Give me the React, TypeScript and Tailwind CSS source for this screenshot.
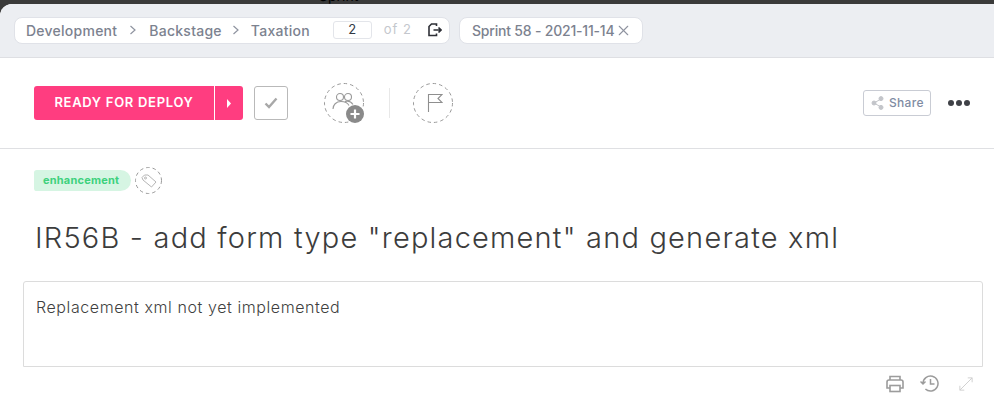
import React from "react";
import { X } from "lucide-react";

const F = { fontFamily: '"Inter", "Noto Sans", sans-serif' };

function Dashed({ size, children }: { size: number; children?: React.ReactNode }) {
  return (
    <div className="relative shrink-0" style={{ width: size, height: size }}>
      <svg className="absolute inset-0" width={size} height={size}>
        <circle cx={size / 2} cy={size / 2} r={size / 2 - 0.5} fill="none" stroke="#9a9a9a" strokeDasharray="3.5 3" />
      </svg>
      {children}
    </div>
  );
}

export default function App() {
  return (
    <div className="w-[994px] h-[412px] bg-[#3a3a3a] overflow-hidden relative" style={F}>
      <div className="h-1 bg-[#3a3a3a] relative overflow-hidden">
        <span className="absolute left-[319px] top-[-12px] text-[14px] leading-[16px] text-black">Sprint</span>
      </div>
      <div className="bg-white rounded-tl-[12px] h-[408px] flex flex-col">
        <div className="h-[54px] bg-[#eceef2] border-b border-[#dedfe3] rounded-tl-[12px] flex items-center gap-[9px] pl-[14px] pb-[1px] shrink-0">
          <div className="h-[27px] w-[436px] bg-white border border-[#e0e2e8] rounded-[8px] flex items-center text-[#7c828f] text-[14px] font-medium tracking-[0.25px] pl-[11px]">
            <span>Development</span>
            <svg className="ml-[12px] mr-[12px]" width="8" height="10" viewBox="0 0 8 10" fill="none" stroke="#8f94a0" strokeWidth="1.2"><path d="M1.5 1l4.5 4-4.5 4" /></svg>
            <span>Backstage</span>
            <svg className="ml-[10px] mr-[11px]" width="8" height="10" viewBox="0 0 8 10" fill="none" stroke="#8f94a0" strokeWidth="1.2"><path d="M1.5 1l4.5 4-4.5 4" /></svg>
            <span>Taxation</span>
            <div className="ml-[23px] w-[39px] h-[18px] border border-[#e3e5ea] rounded-[3px] flex items-center justify-center text-[13px] font-normal text-[#333a45]">2</div>
            <span className="ml-[12px] text-[13px] font-normal text-[#c4c7cd] tracking-[1px]">of 2</span>
            <svg className="ml-[16px]" width="14" height="14" viewBox="0 0 14 14" fill="none" stroke="#2d2f36" strokeWidth="1.6"><path d="M8.5 3V1H3.5L1 3.5V12.5H8.5V10.5M5.5 7H13M10.5 4.5L13 7l-2.5 2.5" /></svg>
          </div>
          <div className="h-[27px] w-[184px] bg-white border border-[#e0e2e8] rounded-[8px] flex items-center text-[#7c828f] text-[14px] font-medium pl-[12px]">
            <span className="whitespace-nowrap tracking-[-0.2px]">Sprint 58 - 2021-11-14</span>
            <X size={17} className="ml-[1px] text-[#8f94a0]" strokeWidth={1.6} />
          </div>
        </div>

        <div className="h-[91px] border-b border-[#dfe0e3] flex items-center pl-[34px] pr-[24px] shrink-0">
          <div className="flex h-[34px] w-[209px] rounded-[3px] overflow-hidden bg-[#ff3d80] text-white">
            <div className="w-[180px] flex items-center justify-center text-[13px] font-semibold tracking-[0.7px]">READY FOR DEPLOY</div>
            <div className="w-[1px] bg-white" />
            <div className="flex-1 flex items-center justify-center">
              <svg width="6" height="9" viewBox="0 0 6 9" fill="#fff"><path d="M1 0l4 4.5L1 9z" /></svg>
            </div>
          </div>
          <div className="ml-[11px] w-[34px] h-[34px] border border-[#b9b9b9] rounded-[3px] flex items-center justify-center">
            <svg width="14" height="12" viewBox="0 0 14 12" fill="none" stroke="#a8a8a8" strokeWidth="2.4"><path d="M1.5 6.5l3.5 3.5 7.5-8.5" /></svg>
          </div>
          <div className="ml-[36px]">
            <Dashed size={40}>
              <svg className="absolute left-[8px] top-[9px]" width="24" height="20" viewBox="0 0 24 20" fill="none" stroke="#9a9a9a" strokeWidth="1.1">
                <circle cx="8" cy="5" r="3.5" /><circle cx="16" cy="5" r="3.5" />
                <path d="M1 17c0-4 3-7.5 8-7.5s7 2 8 4M13 9.5c3-1 6 0 8 3" />
              </svg>
              <div className="absolute left-[22px] top-[22px] w-[18px] h-[18px] rounded-full bg-[#8a8a8a] flex items-center justify-center">
                <svg width="10" height="10" viewBox="0 0 10 10" stroke="#fff" strokeWidth="2.2"><path d="M5 0.5v9M0.5 5h9" /></svg>
              </div>
            </Dashed>
          </div>
          <div className="ml-[25px] w-px h-[30px] bg-[#e8e8e8]" />
          <div className="ml-[23px]">
            <Dashed size={40}>
              <svg className="absolute left-[14px] top-[10px]" width="16" height="20" viewBox="0 0 16 20" fill="none" stroke="#8f8f8f" strokeWidth="1.1"><path d="M1.5 19V1.5H15L11 5.5l4 4H1.5" /></svg>
            </Dashed>
          </div>
          <div className="ml-auto flex items-center">
            <div className="h-[26px] w-[68px] border border-[#c9ccd4] rounded-[3px] flex items-center pl-[7px] gap-[5px] text-[12px] font-medium tracking-[0.3px] text-[#7f8ca3]">
              <svg width="13" height="14" viewBox="0 0 13 14" fill="#c3c5ca" stroke="#c3c5ca"><path d="M10 3L3 7l7 4" fill="none" /><circle cx="10" cy="2.6" r="2" /><circle cx="3" cy="7" r="2" /><circle cx="10" cy="11.4" r="2" /></svg>
              <span>Share</span>
            </div>
            <div className="ml-[17px] flex gap-[2px]">
              <div className="w-[6px] h-[6px] rounded-full bg-[#3f4147]" />
              <div className="w-[6px] h-[6px] rounded-full bg-[#3f4147]" />
              <div className="w-[6px] h-[6px] rounded-full bg-[#3f4147]" />
            </div>
          </div>
        </div>

        <div className="flex items-center pl-[34px] pt-[18px] gap-[4px]">
          <div className="h-[21px] w-[97px] bg-[#d6f5e3] rounded-l-[3px] rounded-r-[11px] flex items-center pl-[9px] text-[11px] font-bold tracking-[0.2px] text-[#3ed17d]">enhancement</div>
          <Dashed size={27}>
            <svg className="absolute left-[6px] top-[7px]" width="16" height="14" viewBox="0 0 16 14" fill="none" stroke="#b5b5b5" strokeWidth="1"><path d="M1 3.5L3.5 1H7l8 7-4.5 5L2 6z" /><circle cx="4.5" cy="4" r="1" /></svg>
          </Dashed>
        </div>

        <h1 className="ml-[35px] mt-[26px] text-[29px] leading-[36px] text-[#3c3c3c] font-light whitespace-nowrap tracking-[1.2px]">IR56B - add form type "replacement" and generate xml</h1>

        <div className="mx-[23px] mt-[25px] w-[960px] h-[86px] border border-[#dcdcdc] rounded-t-[3px] pl-[12px] pt-[15px] text-[16px] leading-[20px] font-light tracking-[0.58px] text-[#3f3f3f] shrink-0">Replacement xml not yet implemented</div>

        <div className="flex items-center justify-end pr-[21px] pt-[7px]">
          <svg width="20" height="18" viewBox="0 0 20 18" fill="none" stroke="#9c9c9c" strokeWidth="1.6"><path d="M5 5V1.5h10V5M5 13H2V7a2 2 0 012-2h12a2 2 0 012 2v6h-3" /><rect x="5" y="10.5" width="10" height="6" /></svg>
          <svg className="ml-[15px]" width="20" height="19" viewBox="0 0 20 19" fill="none" stroke="#9c9c9c" strokeWidth="1.5"><path d="M3 9.5a7.5 7.5 0 112.4 5.5M0.5 7.5L3 10l2.5-2.5M10.5 5v5h4" /></svg>
          <svg className="ml-[19px]" width="14" height="14" viewBox="0 0 16 16" fill="none" stroke="#cfcfcf" strokeWidth="1.1"><path d="M1 15L15 1M10 1h5v5M1 10v5h5" /></svg>
        </div>
      </div>
    </div>
  );
}
